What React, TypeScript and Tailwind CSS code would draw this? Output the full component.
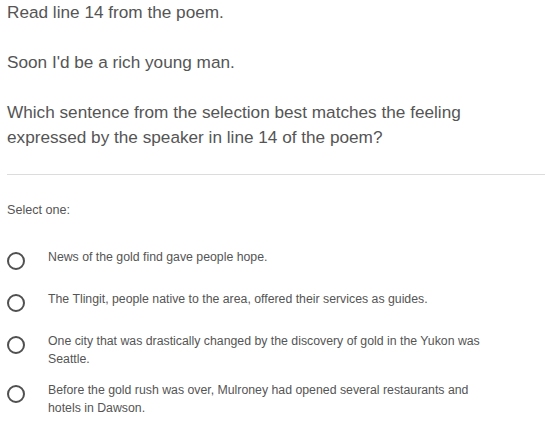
const options = [
  'News of the gold find gave people hope.',
  'The Tlingit, people native to the area, offered their services as guides.',
  'One city that was drastically changed by the discovery of gold in the Yukon was Seattle.',
  'Before the gold rush was over, Mulroney had opened several restaurants and hotels in Dawson.',
];

function Radio() {
  return (
    <span className="block w-[18px] h-[18px] rounded-full border-2 border-[#505050] bg-white shrink-0" />
  );
}

export default function App() {
  return (
    <div className="w-[546px] h-[442px] bg-white overflow-hidden font-['Liberation_Sans',Arial,sans-serif] text-[#555]">
      <div className="pl-[7px] pr-[1px]">
        <div className="w-[500px] text-[17.2px] leading-[25px]">
          <p className="mb-[25px]">Read line 14 from the poem.</p>
          <p className="mb-[25px]">Soon I'd be a rich young man.</p>
          <p>Which sentence from the selection best matches the feeling expressed by the speaker in line 14 of the poem?</p>
        </div>
        <div className="mt-[24px] h-px bg-[#dcdcdc]" />
        <div className="mt-[27px] text-[12.6px] leading-[16px]">Select one:</div>
        <div className="mt-[32px]">
          {options.map((o) => (
            <div key={o} className="flex items-start min-h-[42px]">
              <div className="w-[41px] pt-[2px]">
                <Radio />
              </div>
              <p className="w-[447px] text-[12.3px] leading-[18px] pb-[15px] -mt-[2px]">{o}</p>
            </div>
          ))}
        </div>
      </div>
    </div>
  );
}
